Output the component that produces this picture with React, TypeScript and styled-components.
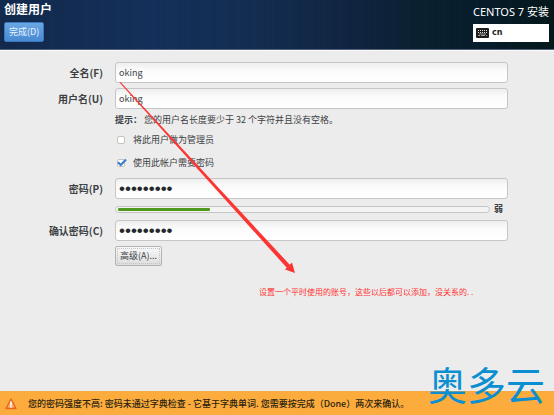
import React, { useState } from "react";
import styled, { createGlobalStyle } from "styled-components";

const GlobalStyle = createGlobalStyle`
  * { box-sizing: border-box; }
  body {
    margin: 0;
    background: #ececec;
    color: #3c4144;
    font-family: "Noto Sans CJK SC", "Noto Sans", sans-serif;
    font-size: 9px;
    line-height: 12px;
  }
  button, input { font: inherit; color: inherit; margin: 0; }
`;

const Page = styled.div`
  position: relative;
  min-height: 100vh;
  display: flex;
  flex-direction: column;
`;

const Header = styled.header`
  display: flex;
  justify-content: space-between;
  height: 50px;
  padding: 1px 5px 0 4px;
  color: #fff;
  background:
    repeating-linear-gradient(90deg, rgba(70, 110, 190, 0.02) 0 2px, transparent 2px 9px, rgba(0, 0, 20, 0.03) 9px 12px, transparent 12px 17px),
    linear-gradient(90deg, #12294c 0%, #14305a 28%, #132c4f 48%, #10243f 64%, #09202f 77%, #071c2a 88%, #041719 100%);
  border-bottom: 1px solid #51607a;
`;

const HeaderSide = styled.div<{ $end?: boolean }>`
  display: flex;
  flex-direction: column;
  align-items: ${(p) => (p.$end ? "stretch" : "flex-start")};
  gap: 4px;
`;

const Title = styled.h1<{ $light?: boolean }>`
  margin: 0;
  font-family: "Noto Sans", "Noto Sans CJK SC", sans-serif;
  font-size: ${(p) => (p.$light ? 11 : 12)}px;
  font-weight: ${(p) => (p.$light ? 400 : 700)};
  line-height: 17px;
  padding-top: ${(p) => (p.$light ? 2 : 0)}px;
  white-space: nowrap;
`;

const DoneButton = styled.button`
  height: 20px;
  padding: 0 4px;
  border: 1px solid #3b79bd;
  border-radius: 2px;
  background: linear-gradient(#6aa7e4, #4889d2);
  color: #e9f3ff;
  line-height: 16px;
`;

const Keyboard = styled.div`
  display: flex;
  align-items: center;
  gap: 3px;
  width: 76px;
  height: 18px;
  padding-left: 3px;
  background: #fff;
  color: #222;
  font-family: "DejaVu Sans", sans-serif;
  font-size: 8px;
  font-weight: 700;
`;

const Form = styled.form`
  flex: 1;
  display: grid;
  grid-template-columns: 91px 1fr;
  column-gap: 12px;
  align-content: start;
  align-items: center;
  padding: 11px 46px 0 12px;
  border-top: 1px solid #fafafa;
`;

const Label = styled.label`
  text-align: right;
  font-size: 10px;
  font-weight: 700;
  white-space: nowrap;
`;

const Field = styled.input`
  width: 100%;
  height: 21px;
  padding: 0 3px;
  border: 1px solid #c6c6c6;
  border-radius: 3px;
  background: linear-gradient(#eeeeee, #fbfbfb 40%, #ffffff);
  outline: none;
  &[type="password"] {
    font-family: "Liberation Sans", sans-serif;
    font-size: 17px;
    color: #24282b;
  }
`;

const Stack = styled.div`
  grid-column: 2;
  display: flex;
  flex-direction: column;
  align-items: flex-start;
`;

const Spacer = styled.div<{ $h: number }>`
  grid-column: 1 / -1;
  height: ${(p) => p.$h}px;
`;

const Hint = styled.p`
  margin: 5px 0 8px;
  line-height: 12px;
`;

const CheckRow = styled.label`
  display: flex;
  align-items: center;
  gap: 8px;
  height: 12px;
  margin: 0 0 11px 2px;
  &:last-child { margin-bottom: 9px; }
`;

const Check = styled.input`
  appearance: none;
  width: 8px;
  height: 8px;
  border: 1px solid #c4c4bc;
  border-radius: 2px;
  background: #fff;
`;

const CheckBox = styled.span`
  position: relative;
  display: flex;
`;

const Tick = styled.svg`
  position: absolute;
  left: 0;
  top: -1px;
  pointer-events: none;
`;

const Strength = styled.div`
  grid-column: 2;
  display: flex;
  align-items: center;
  gap: 3px;
  height: 12px;
  margin: 4px 0 5px;
  font-weight: 700;
`;

const Track = styled.div`
  flex: 1;
  height: 7px;
  margin-right: 1px;
  padding: 1px 2px;
  border: 1px solid #c4c4c4;
  border-radius: 4px;
  background: #f3f3f3;
`;

const Bar = styled.div`
  height: 3px;
  border-radius: 1px;
  background: #4f9a1c;
`;

const Level = styled.span`
  width: 14px;
`;

const Advanced = styled.button`
  height: 20px;
  margin-top: 5px;
  padding: 0 4px;
  border: 1px solid #b4b4b4;
  border-radius: 2px;
  background: linear-gradient(#f8f8f8, #dddddd);
  outline: 1px dotted #c4c4c4;
  outline-offset: -3px;
  line-height: 16px;
`;

const Warning = styled.footer`
  display: flex;
  align-items: center;
  gap: 11px;
  height: 24px;
  padding-left: 5px;
  border-top: 1px solid #f5a940;
  background: #fbac3d;
  color: #2d2310;
  font-weight: 500;
  white-space: nowrap;
`;

const Arrow = styled.svg`
  position: absolute;
  left: 0;
  top: 0;
  pointer-events: none;
`;

const Note = styled.div`
  position: absolute;
  left: 259px;
  top: 286px;
  color: #f33;
  font-size: 8px;
  white-space: nowrap;
`;

const Watermark = styled.div`
  position: absolute;
  right: 9px;
  bottom: 9px;
  color: #0b8fd0;
  font-size: 39px;
  line-height: 46px;
  pointer-events: none;
`;

function KeyboardIcon() {
  return (
    <svg width="13" height="10" viewBox="0 0 13 10" aria-hidden="true">
      <rect width="13" height="10" rx="1" fill="#1d1d1d" />
      <path d="M2 2.5h9M2 4.5h9" stroke="#ddd" strokeDasharray="1 1" />
      <path d="M2 7.5h2M5 7.5h4M10 7.5h1M3 6h7" stroke="#bbb" strokeWidth="0.8" />
    </svg>
  );
}

function WarningIcon() {
  return (
    <svg width="12" height="12" viewBox="0 0 12 12" aria-hidden="true">
      <path d="M6 1.2 11 10.5H1Z" fill="#f37d22" stroke="#e8671b" strokeWidth="1.4" strokeLinejoin="round" />
      <path d="M6 2.6 9.4 9.6H2.6Z" fill="#f5b183" />
      <path d="M6 3.5v4M6 8.3v1.3" stroke="#fff" strokeWidth="1.6" />
    </svg>
  );
}

interface OptionProps {
  label: string;
  initial: boolean;
}

function Option({ label, initial }: OptionProps) {
  const [on, setOn] = useState(initial);
  return (
    <CheckRow>
      <CheckBox>
        <Check type="checkbox" checked={on} onChange={() => setOn(!on)} />
        {on && (
          <Tick width="10" height="9" viewBox="0 0 10 9" aria-hidden="true">
            <path d="M1 4.2 3.8 7 9 1.5" fill="none" stroke="#3c7fc9" strokeWidth="2.2" />
          </Tick>
        )}
      </CheckBox>
      {label}
    </CheckRow>
  );
}

export default function App() {
  const strength = 25;
  return (
    <Page lang="zh-CN">
      <GlobalStyle />
      <Header>
        <HeaderSide>
          <Title>创建用户</Title>
          <DoneButton type="button">完成(D)</DoneButton>
        </HeaderSide>
        <HeaderSide $end>
          <Title as="div" $light>CENTOS 7 安装</Title>
          <Keyboard><KeyboardIcon />cn</Keyboard>
        </HeaderSide>
      </Header>
      <Form>
        <Label htmlFor="full">全名(F)</Label>
        <Field id="full" defaultValue="oking" />
        <Spacer $h={5} />
        <Label htmlFor="user">用户名(U)</Label>
        <Field id="user" defaultValue="oking" />
        <Stack>
          <Hint><b>提示：</b> 您的用户名长度要少于 32 个字符并且没有空格。</Hint>
          <Option label="将此用户做为管理员" initial={false} />
          <Option label="使用此帐户需要密码" initial />
        </Stack>
        <Label htmlFor="pass">密码(P)</Label>
        <Field id="pass" type="password" defaultValue="password1" />
        <Strength>
          <Track><Bar style={{ width: `${strength}%` }} /></Track>
          <Level>弱</Level>
        </Strength>
        <Label htmlFor="confirm">确认密码(C)</Label>
        <Field id="confirm" type="password" defaultValue="password1" />
        <Stack>
          <Advanced type="button">高级(A)...</Advanced>
        </Stack>
      </Form>
      <Warning role="alert">
        <WarningIcon />
        您的密码强度不高: 密码未通过字典检查 - 它基于字典单词. 您需要按完成（Done）两次来确认。
      </Warning>
      <Arrow width="300" height="280" viewBox="0 0 300 280" aria-hidden="true">
        <path d="M119.5 82.5 287 268 290 265 120.5 82Z" fill="#fb3434" />
        <path d="M295 273 285 269.5 292 262.5Z" fill="#fb3434" />
      </Arrow>
      <Note>设置一个平时使用的账号，这些以后都可以添加，没关系的. .</Note>
      <Watermark>奥多云</Watermark>
    </Page>
  );
}
